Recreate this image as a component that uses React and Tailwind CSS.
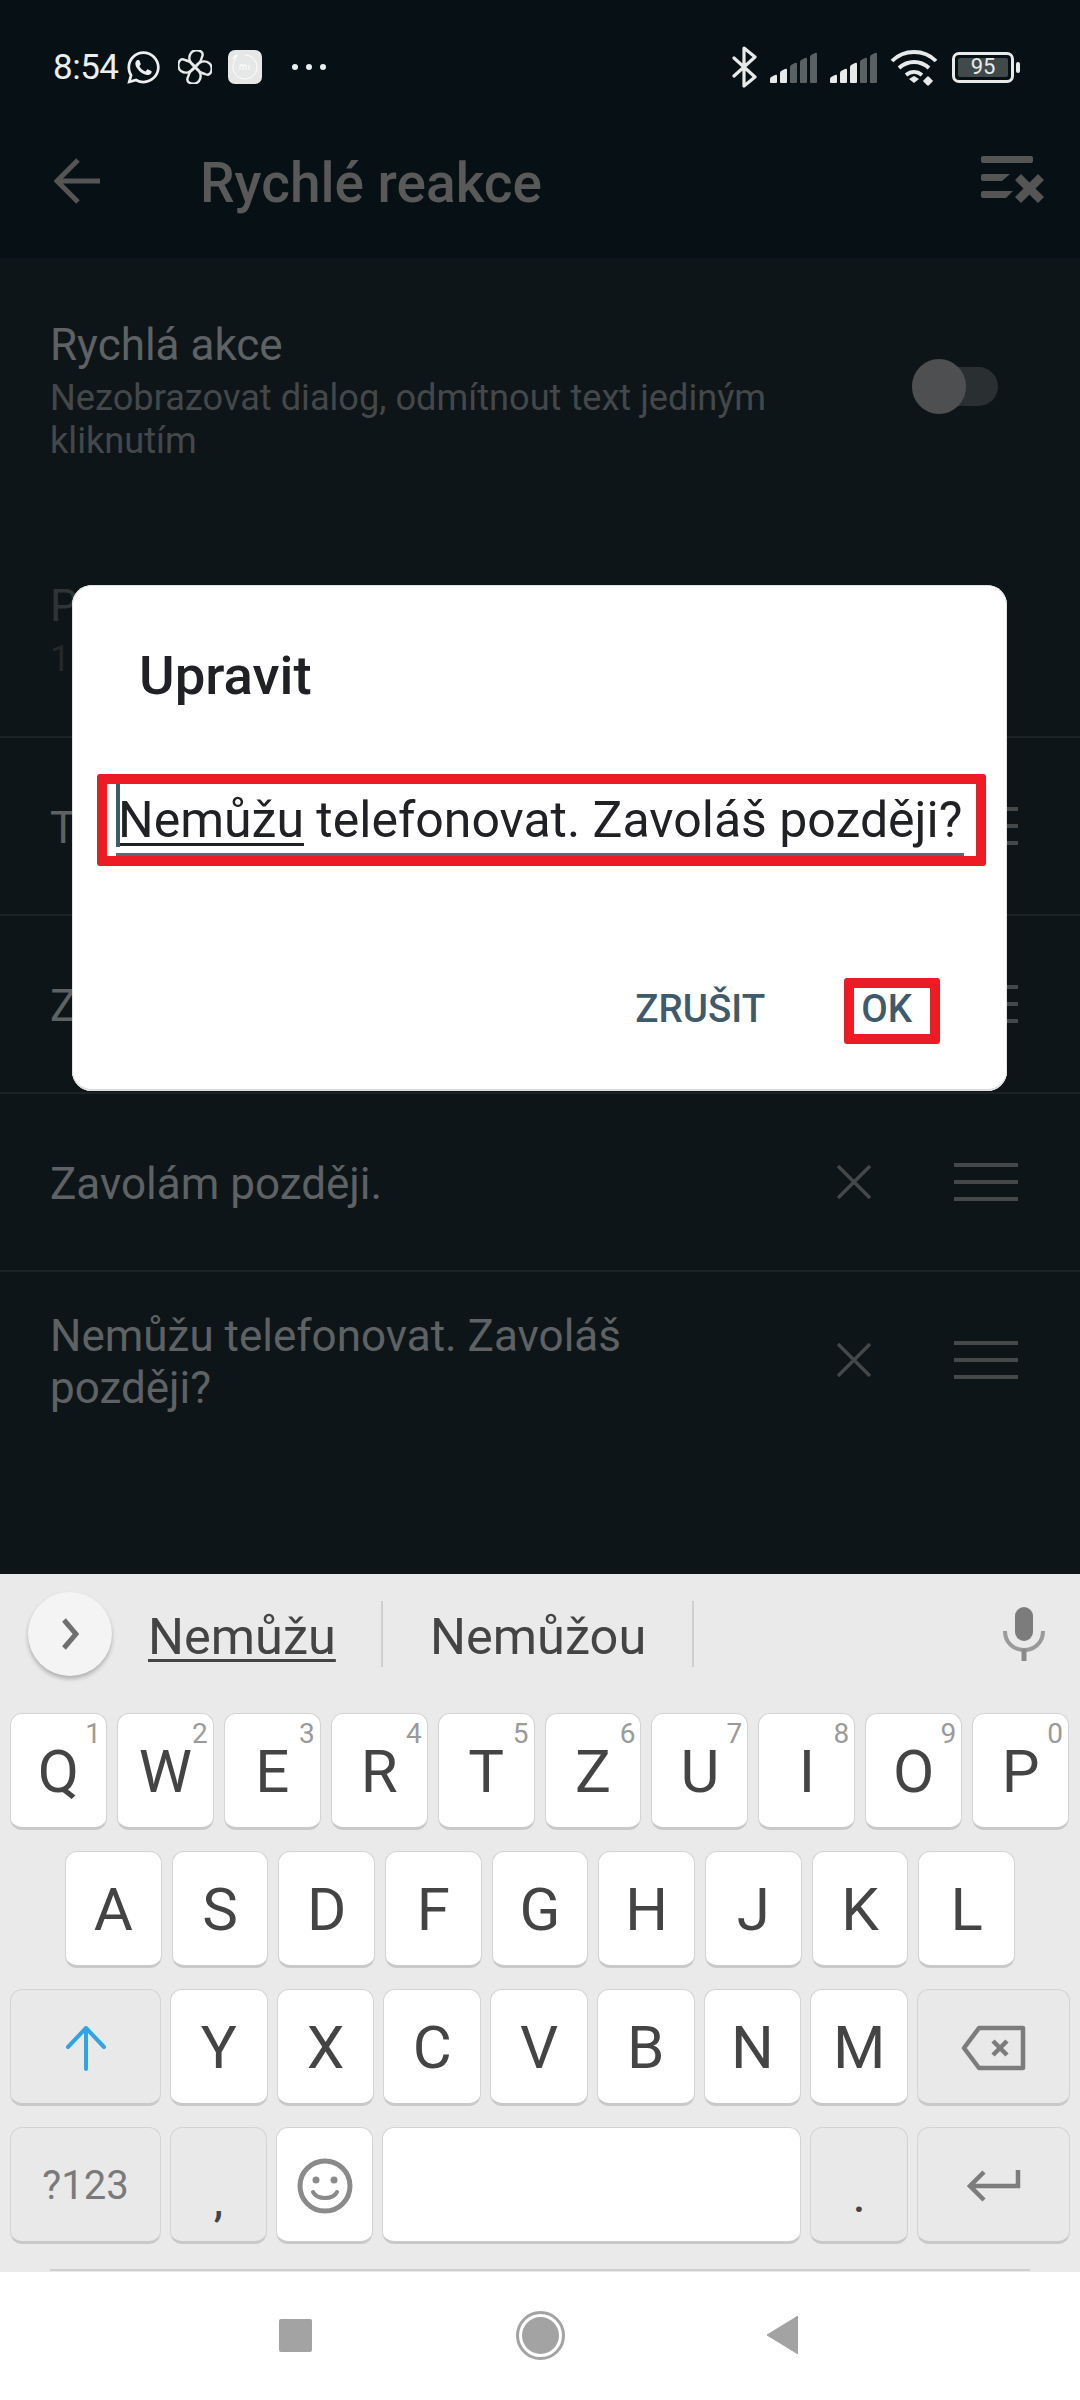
import React from "react";
import { FaWhatsapp } from "react-icons/fa";

const font = { fontFamily: "Roboto, sans-serif" };

function Bars({ lit }) {
  const hs = [9, 15, 21, 26, 31];
  return (
    <div className="flex items-end gap-[3px] h-[32px]">
      {hs.map((h, i) => (
        <svg key={i} width="7" height={h} viewBox={`0 0 7 ${h}`}>
          <path d={`M0 ${h - 1}V5Q0 3.5 2 2.6L5 1Q7 0 7 2V${h - 1}Q7 ${h} 6 ${h}H1Q0 ${h} 0 ${h - 1}Z`} fill={i < lit ? "#e8eaea" : "#5a6162"} />
        </svg>
      ))}
    </div>
  );
}

const blade = "M0 0C-6-4-7-10-4-14-2-17 3-17.500 6-15.500 8-14 8-12 7-10 6-6 3-2 0 0Z";

function StatusBar() {
  return (
    <div className="h-[100px] flex items-start justify-between pl-[53px] pr-[60px] pt-[46px] text-[#eceeef]">
      <div className="flex items-center gap-[10px] h-[42px]">
        <span className="text-[35px] leading-none tracking-[-0.5px] font-normal">8:54</span>
        <FaWhatsapp size={37} className="ml-[-4px]" />
        <svg width="34" height="34" viewBox="-17 -17 34 34" fill="none" stroke="#e8eaea" strokeWidth="2.4" strokeLinejoin="round" className="ml-[6px]">
          <path d={blade} />
          <path d={blade} transform="rotate(90)" />
          <path d={blade} transform="rotate(180)" />
          <path d={blade} transform="rotate(270)" />
        </svg>
        <svg width="34" height="34" viewBox="0 0 34 34" className="ml-[6px]">
          <rect width="34" height="34" rx="7" fill="#e6e7e7" />
          <path d="M8 9A12 12 0 1 0 17 5" fill="none" stroke="#fff" strokeWidth="1" />
          <path d="M5 9L9 5" fill="none" stroke="#fff" strokeWidth="2" />
          <path d="M12 15h6v5M15 15v5M12 15v5M21 15v5" fill="none" stroke="#fff" strokeWidth="1" />
        </svg>
        <div className="flex gap-[8px] ml-[20px]">
          <span className="w-[6px] h-[6px] rounded-full bg-[#eceeef]" />
          <span className="w-[6px] h-[6px] rounded-full bg-[#eceeef]" />
          <span className="w-[6px] h-[6px] rounded-full bg-[#eceeef]" />
        </div>
      </div>
      <div className="flex items-center h-[42px]">
        <svg width="26" height="42" viewBox="0 0 26 42" fill="none" stroke="#e8eaea" strokeWidth="3.2" strokeLinejoin="round" strokeLinecap="round">
          <path d="M2 12l21 19-11 9V2l11 9L2 30" />
        </svg>
        <div className="ml-[12px]"><Bars lit={2} /></div>
        <div className="ml-[13px]"><Bars lit={3} /></div>
        <svg width="48" height="38" viewBox="0 0 48 38" fill="none" stroke="#e8eaea" strokeWidth="3.8" className="ml-[13px]">
          <path d="M2 13C14 1 34 1 46 13" />
          <path d="M9 20c9-8 21-8 30 0" />
          <path d="M16 27c5-4 11-4 16 0" />
          <path d="M19 31l5-3 5 3-5 4z" fill="#e8eaea" stroke="none" />
          <path d="M38 29v8M34 33l3-3v6ZM42 33l-3 3v-6Z" strokeWidth="1.6" fill="#e8eaea" />
        </svg>
        <div className="ml-[14px] flex items-center">
          <div className="w-[62px] h-[31px] rounded-[7px] border-[3px] border-[#e8eaea] p-[3px] flex">
            <div className="flex-1 rounded-[2px] bg-[#42494b] flex items-center justify-center text-[22px] leading-none text-[#e8eaea]">95</div>
          </div>
          <div className="w-[4px] h-[11px] rounded-[2px] bg-[#e8eaea] ml-[2px]" />
        </div>
      </div>
    </div>
  );
}

function TopBar() {
  return (
    <div className="h-[158px] flex pl-[54px] pr-[35px] pt-[58px] items-start">
      <svg width="46" height="46" viewBox="0 0 46 46" fill="none" stroke="#555" strokeWidth="5" className="shrink-0">
        <path d="M46 23H4M24 2L3 23l21 21" />
      </svg>
      <div className="ml-[100px] flex-1 text-[55px] leading-[46px] mt-[2px] font-medium text-[#595959]">Rychlé reakce</div>
      <svg width="64" height="48" viewBox="0 0 64 48" className="mt-[-2px]" fill="#555">
        <rect x="0" y="0" width="52" height="7" rx="2" />
        <path d="M0 20a2 2 0 0 1 2-2h27l-8 7H2a2 2 0 0 1-2-2Z" />
        <path d="M0 37a2 2 0 0 1 2-2h30l-7 7H2a2 2 0 0 1-2-2Z" />
        <path d="M40 18l-6 6 8.500 8.500-8.500 8.500 6 6 8.500-8.500 8.500 8.500 6-6-8.500-8.500 8.500-8.500-6-6-8.500 8.500Z" />
      </svg>
    </div>
  );
}

function Settings() {
  return (
    <div className="h-[226px] flex pl-[50px] justify-between">
      <div className="flex-1 pt-[62px]">
        <div className="text-[44px] leading-[50px] text-[#5f6264]">Rychlá akce</div>
        <div className="text-[36.200px] leading-[43px] text-[#44484b] mt-[6px] w-[800px]">Nezobrazovat dialog, odmítnout text jediným kliknutím</div>
      </div>
      <div className="relative w-[86px] h-[55px] mt-[101px] mr-[82px] flex items-center">
        <div className="w-[80px] h-[39px] rounded-full bg-[#2a2f31] ml-[6px]" />
        <div className="absolute left-0 top-0 w-[54px] h-[55px] rounded-full bg-[#4e4f50]" />
      </div>
    </div>
  );
}

function Row({ lines }) {
  return (
    <div className="h-[178px] border-t-2 border-[#1c2326] flex items-center pl-[50px] pr-[62px]">
      <div className="flex-1 mt-[3px] text-[44px] leading-[52px] text-[#5f6264] w-[650px] pr-[200px]">{lines}</div>
      <svg width="36" height="34" viewBox="0 0 36 34" stroke="#454849" strokeWidth="3.4" className="mr-[82px]">
        <path d="M2 1l32 32M34 1L2 33" />
      </svg>
      <div className="w-[64px] h-[38px] flex flex-col justify-between">
        <div className="h-[4px] bg-[#454849]" />
        <div className="h-[4px] bg-[#454849]" />
        <div className="h-[4px] bg-[#454849]" />
      </div>
    </div>
  );
}

function Dialog() {
  return (
    <div className="absolute left-[72px] top-[585px] w-[935px] h-[506px] bg-white rounded-[20px] shadow-[inset_0_0_0_1px_#e2e2e2,inset_0_-2px_0_0_#d9d9d9]">
      <div className="pl-[67px] pt-[60px] text-[54.500px] leading-[60px] font-medium text-[#202124]">Upravit</div>
      <div className="relative ml-[44px] mt-[84px] w-[848px] h-[67px] border-b-[3px] border-[#5b6a76]">
        <div className="absolute left-0 top-[-5px] w-[4px] h-[63px] bg-[#3f5a6b]" />
        <div className="pl-[2px] text-[50px] leading-[62px] text-[#202124] whitespace-nowrap">
          <span className="underline decoration-[3px] underline-offset-[6px]">Nemůžu</span> telefonovat. Zavoláš později?
        </div>
        <div className="absolute left-[-19px] top-[-15px] w-[889px] h-[92px] border-[10px] border-[#ed1c24] rounded-[3px]" />
      </div>
      <div className="relative flex justify-end items-center mt-[122px] pr-[95px] pb-[4px] h-[66px] gap-[96px] text-[38.500px] leading-none font-medium text-[#3f5a6b]">
        <span>ZRUŠIT</span>
        <span>OK</span>
        <div className="absolute left-[772px] top-0 w-[96px] h-[66px] border-[10px] border-[#ed1c24] rounded-[3px]" />
      </div>
    </div>
  );
}

function Key({ ch, hint, dark, className = "", children }) {
  return (
    <div className={`relative h-[117px] pt-[2px] rounded-[12px] border border-[#d3d3d3] border-b-[3px] border-b-[#c9c9c9] flex items-center justify-center text-[60px] leading-none text-[#444] ${dark ? "bg-[#e9e9e9]" : "bg-white"} ${className}`}>
      {ch}
      {children}
      {hint && <span className="absolute right-[5px] top-[6px] text-[28px] leading-[28px] text-[#9a9a9a]">{hint}</span>}
    </div>
  );
}

function Keyboard() {
  const r1 = [["Q","1"],["W","2"],["E","3"],["R","4"],["T","5"],["Z","6"],["U","7"],["I","8"],["O","9"],["P","0"]];
  return (
    <div className="h-[698px] bg-[#eaeaea] flex flex-col">
      <div className="h-[139px] pt-[18px] pl-[28px] pr-[35px] flex items-start">
        <div className="w-[84px] h-[84px] rounded-full bg-[#f4f4f4] shadow-[0_3px_4px_rgba(0,0,0,0.25)] flex items-center justify-center">
          <svg width="18" height="32" viewBox="0 0 18 32" fill="none" stroke="#6f6f6f" strokeWidth="5"><path d="M3 2l12 14L3 30" /></svg>
        </div>
        <div className="ml-[36px] w-[233px] text-[50.500px] leading-[58px] mt-[16px] text-[#444] underline decoration-[3px] underline-offset-[5px]">Nemůžu</div>
        <div className="w-[2px] h-[66px] bg-[#cfcfcf] mt-[9px]" />
        <div className="ml-[47px] w-[262px] text-[50.500px] leading-[58px] mt-[16px] text-[#444]">Nemůžou</div>
        <div className="w-[2px] h-[66px] bg-[#cfcfcf] mt-[9px]" />
        <div className="flex-1" />
        <svg width="42" height="54" viewBox="0 0 42 54" className="mt-[15px]">
          <rect x="12" y="0" width="18" height="34" rx="9" fill="#7c7c7c" />
          <path d="M2 24c0 12 9 19 19 19s19-7 19-19" fill="none" stroke="#9a9a9a" strokeWidth="4" />
          <rect x="18.5" y="42" width="5" height="12" fill="#8a8a8a" />
        </svg>
      </div>
      <div className="flex flex-col gap-[21px]">
        <div className="flex gap-[10px] pl-[10px] pr-[11px]">
          {r1.map(([c, h]) => <Key key={c} ch={c} hint={h} className="flex-1" />)}
        </div>
        <div className="flex gap-[10px] pl-[65px] pr-[65px]">
          {"ASDFGHJKL".split("").map((c) => <Key key={c} ch={c} className="flex-1" />)}
        </div>
        <div className="flex gap-[9px] px-[10px]">
          <Key dark className="w-[151px]">
            <svg width="42" height="46" viewBox="0 0 42 46" fill="none" stroke="#2fa4e7" strokeWidth="4" strokeLinecap="round" strokeLinejoin="round">
              <path d="M21 44V3M3 22L21 3l18 19" />
            </svg>
          </Key>
          {"YXCVBNM".split("").map((c) => <Key key={c} ch={c} className="flex-1" />)}
          <Key dark className="w-[153px]">
            <svg width="66" height="46" viewBox="0 0 66 46" fill="none" stroke="#7c7c7c" strokeWidth="4.5" strokeLinejoin="round">
              <path d="M18 3h44v40H18L3 23Z" />
              <path d="M32 16l14 14M46 16L32 30" />
            </svg>
          </Key>
        </div>
        <div className="flex gap-[9px] px-[10px]">
          <Key dark className="w-[151px]"><span className="text-[40px] text-[#7a7a7a]">?123</span></Key>
          <Key dark className="w-[97px]"><span className="text-[42px] mt-[32px] font-medium">,</span></Key>
          <Key className="w-[97px]">
            <svg width="56" height="56" viewBox="0 0 56 56" fill="none" stroke="#8a8a8a" strokeWidth="5">
              <circle cx="28" cy="28" r="25" />
              <circle cx="19" cy="22" r="3.5" fill="#8a8a8a" stroke="none" />
              <circle cx="37" cy="22" r="3.5" fill="#8a8a8a" stroke="none" />
              <path d="M16 34c4 8 20 8 24 0" strokeWidth="4" strokeLinecap="round" />
            </svg>
          </Key>
          <Key className="flex-1" />
          <Key dark className="w-[98px]"><span className="text-[42px] mt-[24px] font-medium">.</span></Key>
          <Key dark className="w-[153px]">
            <svg width="54" height="32" viewBox="0 0 54 32" fill="none" stroke="#7c7c7c" strokeWidth="4.5">
              <path d="M51 0v16H4M17 2L3 16l14 14" />
            </svg>
          </Key>
        </div>
      </div>
      <div className="flex-1" />
      <div className="h-[2px] mx-[50px] bg-[#cfcfcf] mb-[1px]" />
    </div>
  );
}

function NavBar() {
  return (
    <div className="flex-1 bg-white flex items-center pl-[279px] pb-[2px]">
      <div className="w-[33px] h-[33px] rounded-[2px] bg-[#a3a3a3]" />
      <div className="ml-[204px] w-[49px] h-[49px] rounded-full border-[3px] border-[#a3a3a3] p-[3px]">
        <div className="w-full h-full rounded-full bg-[#a3a3a3]" />
      </div>
      <svg width="32" height="38" viewBox="0 0 32 38" className="ml-[201px]"><path d="M32 0v38L1 19Z" fill="#a3a3a3" stroke="#a3a3a3" strokeLinejoin="round" /></svg>
    </div>
  );
}

export default function App() {
  return (
    <div className="w-[1080px] h-[2400px] flex flex-col overflow-hidden bg-white" style={font}>
      <div className="relative h-[1574px] bg-[#0e1518]">
        <div className="bg-[#071115]">
          <StatusBar />
          <TopBar />
        </div>
        <Settings />
        <div className="h-[252px] px-[50px] pt-[97px]">
          <div className="text-[44px] leading-[50px] text-[#2f3436]">Přidat</div>
          <div className="text-[36.200px] leading-[43px] text-[#24292b] mt-[6px]">1</div>
        </div>
        <Row lines="Teď nemůžu mluvit." />
        <Row lines="Zavolám za chvíli." />
        <Row lines="Zavolám později." />
        <Row lines="Nemůžu telefonovat. Zavoláš později?" />
        <Dialog />
      </div>
      <Keyboard />
      <NavBar />
    </div>
  );
}
